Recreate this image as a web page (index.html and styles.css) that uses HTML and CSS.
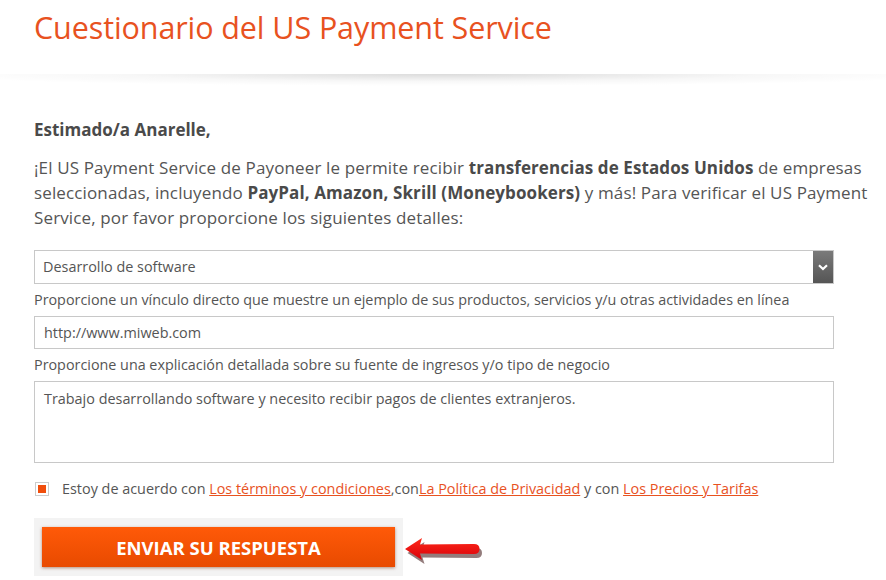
FILE: index.html
```html
<!DOCTYPE html>
<html lang="es">
<head>
<meta charset="utf-8">
<title>Cuestionario del US Payment Service</title>
<link rel="stylesheet" href="styles.css">
</head>
<body>
<header class="header">
  <h1 class="title">Cuestionario del US Payment Service</h1>
</header>
<main class="content">
  <p class="greeting">Estimado/a Anarelle,</p>
  <p class="intro">¡El US Payment Service de Payoneer le permite recibir <b>transferencias de Estados Unidos</b> de empresas seleccionadas, incluyendo <b>PayPal, Amazon, Skrill (Moneybookers)</b> y más! Para verificar el US Payment Service, por favor proporcione los siguientes detalles:</p>
  <form class="form">
    <div class="select">
      <span class="select-value">Desarrollo de software</span>
      <span class="select-btn">
        <svg width="10" height="7" viewBox="0 0 10 7"><path d="M1 1.2 L5 5 L9 1.2" fill="none" stroke="#fff" stroke-width="2.2"/></svg>
      </span>
    </div>
    <label class="label">Proporcione un vínculo directo que muestre un ejemplo de sus productos, servicios y/u otras actividades en línea</label>
    <div class="input">http://www.miweb.com</div>
    <label class="label">Proporcione una explicación detallada sobre su fuente de ingresos y/o tipo de negocio</label>
    <div class="textarea">Trabajo desarrollando software y necesito recibir pagos de clientes extranjeros.</div>
    <div class="agree">
      <span class="checkbox"><span class="checkbox-fill"></span></span>
      <span class="agree-text">Estoy de acuerdo con <a href="#">Los términos y condiciones</a>,con<a href="#">La Política de Privacidad</a> y con <a href="#">Los Precios y Tarifas</a></span>
    </div>
    <div class="submit-row">
      <div class="submit-box">
        <span class="submit">ENVIAR SU RESPUESTA</span>
      </div>
      <svg class="arrow" width="80" height="32" viewBox="0 0 80 32">
        <defs>
          <linearGradient id="ag" x1="0" y1="0" x2="0" y2="1">
            <stop offset="0" stop-color="#ff2a1a"/>
            <stop offset="1" stop-color="#d8000a"/>
          </linearGradient>
        </defs>
        <path d="M3 18 L20 7 L18 13.5 L72 13 Q77.5 13 77.5 18 Q77.5 23 72 23 L18 22.5 L20 29 Z" fill="#3a1010" opacity="0.55" transform="translate(1.5 2)"/>
        <path d="M2 16 L19 5 L17 11.5 L71 11 Q76.5 11 76.5 16 Q76.5 21 71 21 L17 20.5 L19 27 Z" fill="url(#ag)"/>
      </svg>
    </div>
  </form>
</main>
</body>
</html>
```
FILE: styles.css
```css
* { box-sizing: border-box; }
html, body { margin: 0; padding: 0; background: #fff; }
body {
  font-family: "Open Sans", "DejaVu Sans", sans-serif;
  color: #555;
  width: 886px;
  height: 580px;
  overflow: hidden;
}
.header {
  position: relative;
  height: 74px;
  padding: 6px 34px 0;
  background: #fff;
}
.header::after {
  content: "";
  position: absolute;
  left: 0;
  right: 0;
  top: 74px;
  height: 12px;
  background: radial-gradient(ellipse 60% 100% at 50% 0, rgba(0,0,0,0.14), rgba(0,0,0,0.03) 60%, rgba(0,0,0,0) 100%);
}
.title {
  margin: 0;
  font-size: 30.5px;
  font-weight: 400;
  line-height: 42px;
  color: #e8521f;
  letter-spacing: -0.1px;
}
.content {
  padding: 46px 14px 0 34px;
}
.greeting {
  margin: 0;
  font-size: 17px;
  font-weight: 700;
  line-height: 20px;
  color: #4a4a4a;
}
.intro {
  margin: 15px 0 0;
  font-size: 17px;
  line-height: 25px;
  letter-spacing: 0.13px;
  color: #555;
}
.intro b {
  font-size: 17px;
  letter-spacing: 0.1px;
  color: #4a4a4a;
}
.form {
  display: flex;
  flex-direction: column;
  margin-top: 20px;
  width: 800px;
}
.select {
  display: flex;
  align-items: center;
  height: 34px;
  border: 1px solid #c8c8c8;
  font-size: 14.4px;
  line-height: 20px;
}
.select-value { flex: 1; padding-left: 8px; }
.select-btn {
  display: flex;
  align-items: center;
  justify-content: center;
  width: 20px;
  align-self: stretch;
  background: linear-gradient(#7a7a7a, #555);
}
.label {
  margin: 6px 0;
  font-size: 14.35px;
  line-height: 20px;
  color: #555;
}
.input {
  height: 33px;
  border: 1px solid #c8c8c8;
  padding: 0 9px;
  font-size: 14.4px;
  line-height: 31px;
}
.textarea {
  height: 82px;
  border: 1px solid #c8c8c8;
  padding: 7px 9px;
  font-size: 14.4px;
  line-height: 20px;
}
.agree {
  display: flex;
  align-items: center;
  margin-top: 16px;
  font-size: 14.4px;
  line-height: 20px;
}
.checkbox {
  display: flex;
  align-items: center;
  justify-content: center;
  width: 14px;
  height: 14px;
  margin-left: 1px;
  border: 1px solid #ccc;
  background: #fff;
}
.checkbox-fill {
  width: 8px;
  height: 8px;
  background: #f04e0c;
}
.agree-text { margin-left: 13px; }
.agree a { color: #e8521f; text-decoration: underline; }
.submit-row {
  display: flex;
  align-items: center;
  gap: 0;
  margin-top: 19px;
}
.submit-box {
  width: 369px;
  height: 58px;
  padding: 9px 8px;
  background: #f3f3f3;
}
.submit {
  display: flex;
  align-items: center;
  justify-content: center;
  height: 40px;
  background: linear-gradient(#ff5a08, #e84a00);
  box-shadow: 0 1px 3px rgba(120,40,0,0.5);
  color: #fff;
  font-size: 18.5px;
  font-weight: 700;
}
.arrow { margin-top: 3px; }
```
